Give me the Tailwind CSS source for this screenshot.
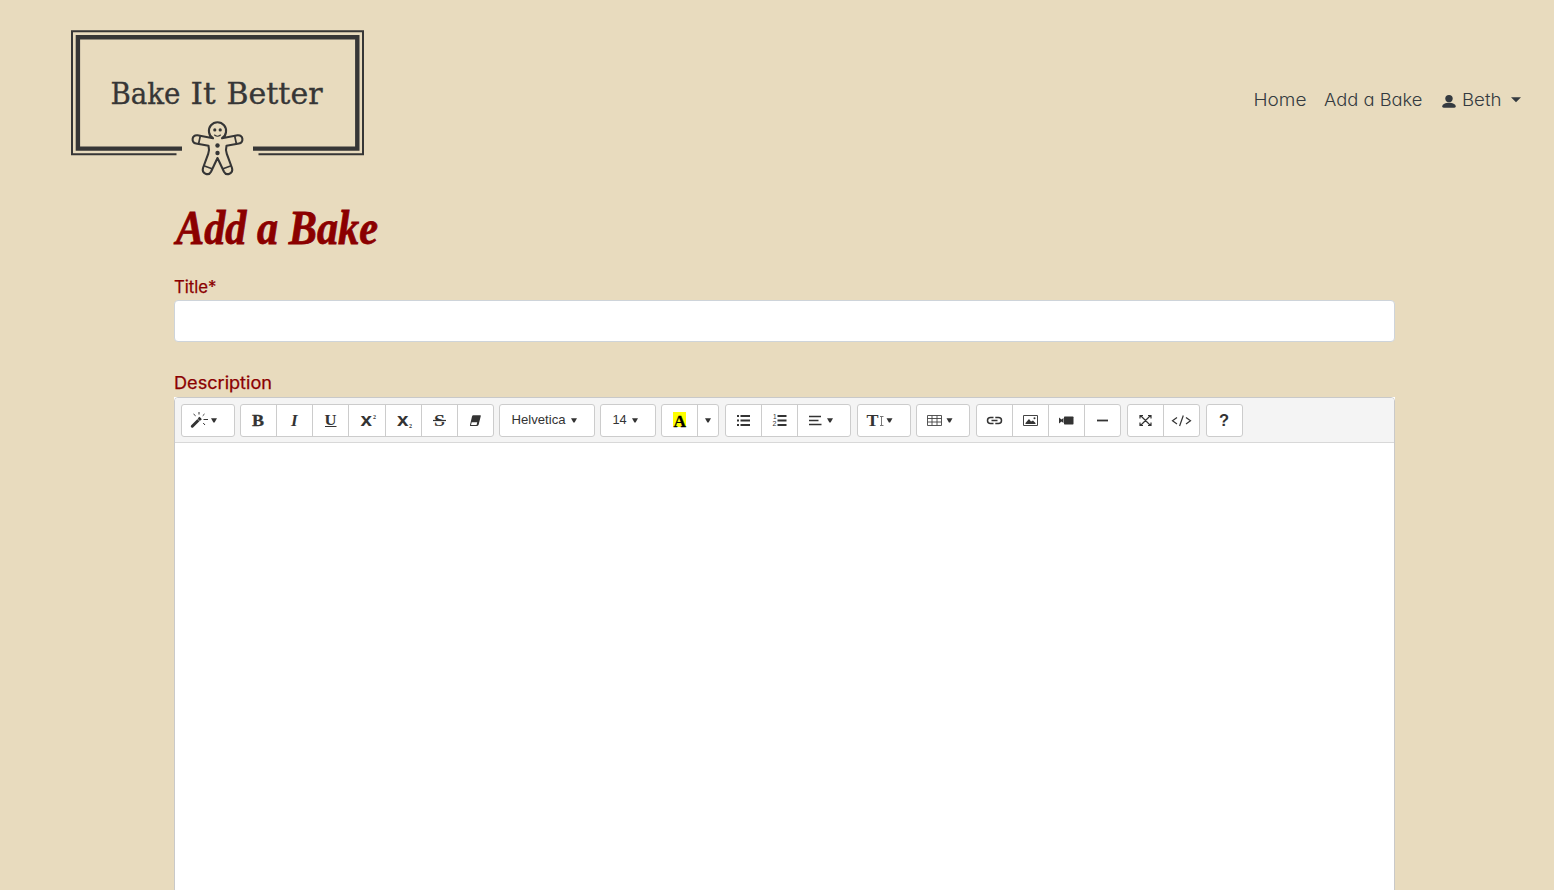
<!DOCTYPE html>
<html lang="en">
<head>
<meta charset="utf-8">
<title>Bake It Better</title>
<script src="https://cdn.jsdelivr.net/npm/@tailwindcss/browser@4"></script>
</head>
<body class="bg-[#e8dbbe] h-[890px] overflow-hidden font-['Inter',sans-serif] [font-feature-settings:'cv11']">
<svg class="hidden">
  <symbol id="caret" viewBox="0 0 6 5" overflow="visible"><path d="M0 0.3H6L3.6 4.6H2.4Z"/></symbol>
</svg>
<header class="flex h-[200px] justify-between pl-[70px] pr-[32px]">
  <a class="mt-[29px] block h-[150px] w-[296px]">
    <svg width="296" height="150" viewBox="70 29 296 150" fill="none" stroke="#363636">
      <path stroke-width="2" d="M176.5 154.200H72V31.300H363V154.200H258.500"/>
      <path stroke-width="4.400" d="M182 148.600H77.900V37.200H357.300V148.600H253"/>
      <g font-family="DejaVu Serif" font-size="30" fill="#363636" stroke="#363636" stroke-width=".35">
        <text x="110.500" y="103.700" textLength="70" lengthAdjust="spacingAndGlyphs">Bake</text>
        <text x="190.500" y="103.700" textLength="25" lengthAdjust="spacingAndGlyphs">It</text>
        <text x="226.500" y="103.700" textLength="96" lengthAdjust="spacingAndGlyphs">Better</text>
      </g>
      <g stroke-width="2.100" stroke-linejoin="round" stroke-linecap="round">
        <path d="M213 138.200A8.600 8.600 0 1 1 222 138.200L237.500 135.300C243.500 134.900 244 142.800 239 143.500L226.500 145.800Q225.300 150.300 226.800 153.800L232 168C233.500 173.500 226.500 176.500 224 171.700L217.500 158L211 171.700C208.500 176.500 201.500 173.500 203 168L208.200 153.800Q209.700 150.300 208.500 145.800L196 143.500C191 142.800 191.500 134.900 197.500 135.300Z"/>
        <path stroke-width="1.700" d="M200.300 136L198.600 143.800M234.700 136L236.400 143.800M204.500 166L212 168.700M230.500 166L223 168.700"/>
        <path stroke-width="1.100" d="M214.500 135Q217.500 137.400 220.500 135"/>
      </g>
      <g fill="#363636" stroke="none"><circle cx="214.800" cy="129.900" r="1.600"/><circle cx="220.200" cy="129.900" r="1.600"/><circle cx="217.500" cy="145.500" r="2.200"/><circle cx="217.500" cy="153" r="2.200"/></g>
    </svg>
  </a>
  <nav class="mt-[84px] h-8 w-[268px]">
    <svg width="268" height="32" viewBox="1254 84 268 32" fill="#343a40" font-size="17.600" font-weight="280" overflow="visible">
      <text x="1253.500" y="106.200" textLength="53" lengthAdjust="spacingAndGlyphs">Home</text>
      <text x="1324" y="106.200" textLength="98.500" lengthAdjust="spacingAndGlyphs">Add a Bake</text>
      <circle cx="1449" cy="98.600" r="3.700"/><path d="M1442.300 106.200C1442.300 101.500 1455.700 101.500 1455.700 106.200Q1455.700 107.800 1454 107.800H1444Q1442.300 107.800 1442.300 106.200Z"/>
      <text x="1462" y="106.200" textLength="39.500" lengthAdjust="spacingAndGlyphs">Beth</text>
      <path d="M1511 97.200H1521L1516 102.200Z"/>
    </svg>
  </nav>
</header>
<main class="ml-[174px] w-[1221px]">
  <h1 class="h-[76px]"><svg width="240" height="60" viewBox="174 200 240 60" overflow="visible"><text x="176" y="243.500" font-family="Liberation Serif" font-size="49" font-weight="700" font-style="italic" fill="#8b0000" stroke="#8b0000" stroke-width=".8" textLength="202" lengthAdjust="spacingAndGlyphs">Add a Bake</text></svg></h1>
  <label class="block h-6"><svg width="120" height="24" viewBox="174 276 120 24"><text x="174" y="293" font-size="17" font-weight="400" fill="#8b0000" stroke="#8b0000" stroke-width=".25" textLength="42.500" lengthAdjust="spacingAndGlyphs">Title*</text></svg></label>
  <input class="block h-[42px] w-full rounded border border-[#ced4da] bg-white" aria-label="Title">
  <label class="mt-[30px] block h-[25px]"><svg width="120" height="25" viewBox="174 372 120 25"><text x="174" y="389" font-size="17" font-weight="400" fill="#8b0000" stroke="#8b0000" stroke-width=".25" textLength="98" lengthAdjust="spacingAndGlyphs">Description</text></svg></label>
  <section class="h-[500px] bg-white"><div class="h-[500px] rounded-t border border-[#c9c9c9] bg-white">
    <div class="flex h-[45px] items-start rounded-t-[3px] border-b border-[#d8d8d8] bg-[#f4f4f4] pl-[6px] pt-[6px] [&>div]:mr-[5px] [&>div]:flex [&>div]:h-[33px] [&>div]:shrink-0 [&>div]:rounded-[3px] [&>div]:border [&>div]:border-[#ccc] [&>div]:bg-white [&_button]:block [&_button]:h-[31px] [&_button+button]:border-l [&_button+button]:border-[#ccc] [&_svg]:block [&_svg]:overflow-visible">
      <div><button><svg width="52" height="31" viewBox="182 405 52 31" fill="#333" stroke="#333"><path d="M192.300 426.200L199.600 419" stroke-width="3" stroke-linecap="round"/><path d="M197 418.500L199.800 421.300" stroke="#fff" stroke-width=".6"/><path d="M199.300 419.300L200.600 418" stroke-width="3.400"/><path stroke-width="1" fill="none" d="M199 412V414.500M193.500 414L195.600 415.800M204.500 414L202.700 415.800M203.500 419.500H208M203.200 423L205 425"/><use href="#caret" x="211" y="418" width="6" height="5" stroke="none"/></svg></button></div>
      <div>
        <button><svg width="35" height="31" viewBox="241 405 35 31"><text x="252" y="426" font-family="Liberation Serif" font-size="16.500" font-weight="700" fill="#333" stroke="#333" stroke-width=".3" textLength="12" lengthAdjust="spacingAndGlyphs">B</text></svg></button>
        <button><svg width="35" height="31" viewBox="277 405 35 31"><text x="291" y="426" font-family="Liberation Serif" font-size="17" font-weight="700" font-style="italic" fill="#333">I</text></svg></button>
        <button><svg width="35" height="31" viewBox="313 405 35 31"><text x="324.500" y="425" font-family="Liberation Serif" font-size="15.500" font-weight="700" fill="#333" textLength="12" lengthAdjust="spacingAndGlyphs">U</text><path d="M325 426.500H336.500" stroke="#333"/></svg></button>
        <button><svg width="36" height="31" viewBox="349 405 36 31" fill="#333" font-weight="700"><text x="360.500" y="426" font-family="Liberation Sans" font-size="19" textLength="11.500" lengthAdjust="spacingAndGlyphs">x</text><text x="373" y="418.500" font-family="Liberation Serif" font-size="6">2</text></svg></button>
        <button><svg width="35" height="31" viewBox="386 405 35 31" fill="#333" font-weight="700"><text x="397" y="426" font-family="Liberation Sans" font-size="19" textLength="11.500" lengthAdjust="spacingAndGlyphs">x</text><text x="409" y="428" font-family="Liberation Serif" font-size="6">2</text></svg></button>
        <button><svg width="35" height="31" viewBox="422 405 35 31"><text x="434" y="426.300" font-family="Liberation Serif" font-size="17.500" font-weight="700" fill="#333" textLength="11" lengthAdjust="spacingAndGlyphs">S</text><path d="M433 421.600H446" stroke="#fff"/><path d="M433 420.500H446" stroke="#333" stroke-width="1.200"/></svg></button>
        <button><svg width="35" height="31" viewBox="458 405 35 31" fill="#333"><path d="M473.300 415.300H480.300Q481 415.300 480.800 416L478.600 424.800Q478.300 425.900 477.100 425.900H470.500Q469.700 425.900 470 425L472 416.500Q472.300 415.300 473.300 415.300Z"/><path fill="#fff" d="M471.700 422.200H477.200L476.600 424.900H471Z"/></svg></button>
      </div>
      <div><button><svg width="94" height="31" viewBox="500 405 94 31" fill="#333"><text x="511.500" y="424" font-family="Liberation Sans" font-size="12.800" textLength="54" lengthAdjust="spacingAndGlyphs">Helvetica</text><use href="#caret" x="571" y="418" width="6" height="5"/></svg></button></div>
      <div><button><svg width="54" height="31" viewBox="601 405 54 31" fill="#333"><text x="612.500" y="424" font-family="Liberation Sans" font-size="12.800">14</text><use href="#caret" x="632" y="418" width="6" height="5"/></svg></button></div>
      <div class="!mr-[6px]">
        <button><svg width="35" height="31" viewBox="662 405 35 31"><path fill="#ff0" d="M673 412H686V427H673Z"/><text x="673.500" y="426.500" font-family="Liberation Serif" font-size="17.500" font-weight="700" textLength="12.500" lengthAdjust="spacingAndGlyphs" stroke="#000" stroke-width=".3">A</text></svg></button>
        <button><svg width="20" height="31" viewBox="698 405 20 31" fill="#333"><use href="#caret" x="705" y="418" width="6" height="5"/></svg></button>
      </div>
      <div class="!mr-[6px]">
        <button><svg width="35" height="31" viewBox="726 405 35 31" stroke="#333" stroke-width="1.800" fill="none"><path d="M737 416H739M737 420.500H739M737 425H739M740.500 416H750M740.500 420.500H750M740.500 425H750"/></svg></button>
        <button><svg width="35" height="31" viewBox="762 405 35 31" fill="#333"><path stroke="#333" stroke-width="1.800" d="M777.500 416H786.500M777.500 420.500H786.500M777.500 425H786.500"/><text x="773" y="419" font-family="Liberation Sans" font-size="6.500">1</text><text x="772.500" y="426" font-family="Liberation Sans" font-size="7">2</text></svg></button>
        <button><svg width="52" height="31" viewBox="798 405 52 31" fill="#333"><path stroke="#333" stroke-width="1.500" d="M809 416.500H821M809 420.500H818.500M809 424.500H821.500"/><use href="#caret" x="827" y="418" width="6" height="5"/></svg></button>
      </div>
      <div><button><svg width="52" height="31" viewBox="858 405 52 31" fill="#333"><text x="866.500" y="426" font-family="Liberation Serif" font-size="16.500" font-weight="700" textLength="12" lengthAdjust="spacingAndGlyphs">T</text><path fill="none" stroke="#777" d="M880 416.500H883.500M880 425.500H883.500M881.500 416.500V425.500"/><use href="#caret" x="886.500" y="418" width="6" height="5"/></svg></button></div>
      <div class="!mr-[6px]"><button><svg width="52" height="31" viewBox="917 405 52 31" fill="#333"><path fill="none" stroke="#444" stroke-width=".9" d="M927.500 415.500H941.500V425.500H927.500ZM927.500 418.500H941.500M927.500 422H941.500M932 415.500V425.500M937 415.500V425.500"/><use href="#caret" x="946.500" y="418" width="6" height="5"/></svg></button></div>
      <div class="!mr-[6px]">
        <button><svg width="35" height="31" viewBox="977 405 35 31" fill="none" stroke="#333" stroke-width="1.500"><path d="M993.500 417.500H990.500A3 3 0 0 0 990.500 423.500H993.500M995.300 417.500H998.500A3 3 0 0 1 998.500 423.500H995.300M991.500 420.500H997.500"/></svg></button>
        <button><svg width="35" height="31" viewBox="1013 405 35 31" fill="#333"><path fill="none" stroke="#444" d="M1023.500 415.500H1037.500V425.500H1023.500Z"/><path d="M1025.500 424V423L1029 419L1031 421.500L1033 420.500L1035.500 423V424Z"/><circle cx="1034.500" cy="418.200" r="1"/></svg></button>
        <button><svg width="35" height="31" viewBox="1049 405 35 31" fill="#333"><rect x="1064" y="416.500" width="9.500" height="8" rx=".7"/><path d="M1059 417.500L1061.500 419.500L1063.500 418V423L1061.500 421.500L1059 423.500Z"/></svg></button>
        <button><svg width="35" height="31" viewBox="1085 405 35 31"><path stroke="#333" stroke-width="1.800" d="M1097 420.500H1108"/></svg></button>
      </div>
      <div class="!mr-[6px]">
        <button><svg width="35" height="31" viewBox="1128 405 35 31" fill="none" stroke="#333" stroke-width="1.200"><path d="M1140.500 415.500L1150.500 425.500M1150.500 415.500L1140.500 425.500M1140 418.500V415.500H1143M1148 415.500H1151V418.500M1140 422.500V425.500H1143M1148 425.500H1151V422.500"/></svg></button>
        <button><svg width="35" height="31" viewBox="1164 405 35 31" fill="none" stroke="#333" stroke-width="1.200"><path d="M1177 417.500L1172.500 420.800L1177 424M1186 417.500L1190.500 420.800L1186 424M1183.300 415.500L1179.600 426"/></svg></button>
      </div>
      <div><button><svg width="35" height="31" viewBox="1207 405 35 31"><text x="1219" y="426.300" font-family="Liberation Sans" font-size="16.500" font-weight="700" fill="#333">?</text></svg></button></div>
    </div>
  </div></section>
</main>
</body>
</html>
